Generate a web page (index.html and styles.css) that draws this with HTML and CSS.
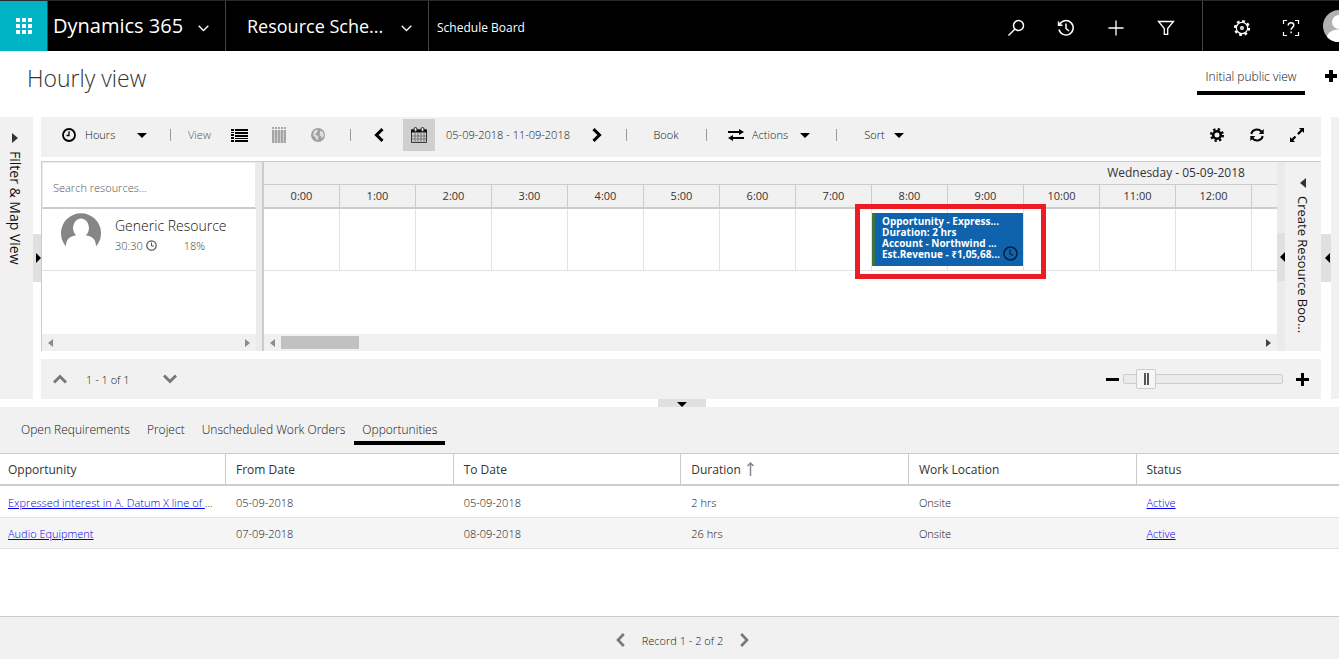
FILE: index.html
```html
<!DOCTYPE html>
<html lang="en">
<head>
<meta charset="utf-8">
<title>Schedule Board</title>
<link rel="stylesheet" href="styles.css">
</head>
<body>
<header class="topbar">
  <button class="waffle" aria-label="Apps">
    <svg width="16" height="16" viewBox="0 0 16 16" fill="#fff"><path d="M0 0h4v4H0zM6 0h4v4H6zM12 0h4v4h-4zM0 6h4v4H0zM6 6h4v4H6zM12 6h4v4h-4zM0 12h4v4H0zM6 12h4v4H6zM12 12h4v4h-4z"/></svg>
  </button>
  <button class="brand">Dynamics 365
    <svg width="11" height="7" viewBox="0 0 11 7" fill="none" stroke="#fff" stroke-width="1.3"><path d="M.7.8l4.8 4.7L10.300.8"/></svg>
  </button>
  <button class="area">Resource Sche...
    <svg width="11" height="7" viewBox="0 0 11 7" fill="none" stroke="#fff" stroke-width="1.3"><path d="M.7.8l4.8 4.7L10.300.8"/></svg>
  </button>
  <a class="crumb" href="#">Schedule Board</a>
  <div class="top-tools">
    <button aria-label="Search"><svg width="18" height="18" viewBox="0 0 18 18" fill="none" stroke="#fff" stroke-width="1.5"><circle cx="11.500" cy="6.500" r="5"/><path d="M8 10l-6.500 6.500"/></svg></button>
    <button aria-label="Recent"><svg width="18" height="18" viewBox="0 0 18 18" fill="none" stroke="#fff" stroke-width="1.500"><path d="M2.600 5.500A7.200 7.200 0 1 1 2 10.500M1.500 2.500v3.700h4M9 4.500v5l3 2.500"/></svg></button>
    <button aria-label="Create"><svg width="16" height="16" viewBox="0 0 16 16" stroke="#fff" stroke-width="1.300"><path d="M8 .5v15M.5 8h15"/></svg></button>
    <button aria-label="Filter"><svg width="18" height="16" viewBox="0 0 18 16" fill="none" stroke="#fff" stroke-width="1.300"><path d="M1.500 1.500h15l-5.800 7v5.800H7.300V8.500z"/></svg></button>
  </div>
  <div class="user-tools">
    <button aria-label="Settings"><svg width="18" height="18" viewBox="0 0 18 18" fill="none" stroke="#fff"><circle cx="9" cy="9" r="7" stroke-width="2.200" stroke-dasharray="2.750"/><circle cx="9" cy="9" r="5.700" stroke-width="1.200"/><circle cx="9" cy="9" r="1.300" stroke-width="1.400"/></svg></button>
    <button aria-label="Help"><svg width="18" height="18" viewBox="0 0 18 18" fill="none" stroke="#fff" stroke-width="1.200"><path d="M1.500 5V1.500H5M13 1.500h3.500V5M16.500 13v3.500H13M5 16.500H1.500V13"/><path d="M6.200 6.500c0-3.800 5.600-3.400 5.600-.2 0 2-2.700 2.200-2.700 4.500M9.100 12.500v1.700" stroke-width="1.500"/></svg></button>
    <button class="avatar" aria-label="Account"><svg width="32" height="32" viewBox="0 0 32 32"><circle cx="16" cy="16" r="16" fill="#b1b1b1"/><circle cx="16" cy="12" r="7" fill="#fff"/><path d="M4 27c1-10 23-10 24 0-6 7-18 7-24 0" fill="#fff"/></svg></button>
  </div>
</header>

<div class="title-row">
  <h1>Hourly view</h1>
  <button class="view-tab">Initial public view</button>
  <button class="add-tab" aria-label="Add tab"><svg width="14" height="14" viewBox="0 0 14 14" stroke="#000" stroke-width="4"><path d="M7 1v12M1 7h12"/></svg></button>
</div>

<main class="workspace">
  <aside class="side-panel">
    <svg width="6" height="10" viewBox="0 0 6 10"><path d="M0 0l6 5-6 5z" fill="#333"/></svg>
    <span>Filter &amp; Map View</span>
  </aside>
  <div class="gutter"><button aria-label="Expand filter"><svg width="5" height="10" viewBox="0 0 5 10"><path d="M0 0l5 5-5 5z"/></svg></button></div>

  <section class="center">
    <div class="toolbar">
      <button class="hours">
        <svg width="14" height="14" viewBox="0 0 14 14" fill="none" stroke="#000"><circle cx="7" cy="7" r="6" stroke-width="1.800"/><path d="M7 3.200V7.500H4.500" stroke-width="1.300"/></svg>
        Hours
        <svg class="push" width="10" height="5" viewBox="0 0 10 5"><path d="M0 0h10L5 5z"/></svg>
      </button>
      <i class="sep"></i>
      <span class="view-label">View</span>
      <button class="icon" aria-label="List view"><svg width="17" height="13" viewBox="0 0 17 13"><path d="M0 0h3v2H0zM4 0h13v2H4zM0 3h3v1H0zM4 3h13v2H4zM0 5h3v2H0zM4 6h13v2H4zM0 8h3v2H0zM4 9h13v1H4zM0 11h3v2H0zM4 11h13v2H4z"/></svg></button>
      <button class="icon" aria-label="Column view"><svg width="14" height="16" viewBox="0 0 14 16" fill="#a6a6a6"><path d="M0 0h2v2H0zM3 0h2v2H3zM6 0h2v2H6zM9 0h2v2H9zM12 0h2v2h-2zM0 3h14v13H0z"/><path d="M2.500 3v13M5.500 3v13M8.500 3v13M11.500 3v13" stroke="#cfcfcf"/></svg></button>
      <button class="icon" aria-label="Map view"><svg width="14" height="14" viewBox="0 0 14 14"><circle cx="7" cy="7" r="7" fill="#a0a0a0"/><path d="M3 3l3-1.500 1 1.200L5.500 5 4 6.500l3 1.500.5 2L6 12.500 4.500 9.500 2 7.500zM9 2.500l3 1.500 1 3.500-2 3-1-2-1.500-1.500L9 5z" fill="#dedede"/></svg></button>
      <i class="sep"></i>
      <button class="prev" aria-label="Previous"><svg width="10" height="14" viewBox="0 0 10 14" fill="none" stroke="#000" stroke-width="3"><path d="M8.500 1.200L2.500 7l6 5.800"/></svg></button>
      <button class="calendar" aria-label="Calendar"><svg width="16" height="16" viewBox="0 0 16 16"><path d="M.5 3h15v12.500H.5z" fill="none" stroke="#333"/><path d="M0 2.500h16v3H0z" fill="#111"/><path d="M4 5v10.500M7 5v10.500M10 5v10.500M13 5v10.500M1 9h14M1 12h14" stroke="#777" fill="none"/><rect x="3" y=".5" width="3" height="4" rx="1.500" fill="#ddd" stroke="#222"/><rect x="10" y=".5" width="3" height="4" rx="1.500" fill="#ddd" stroke="#222"/></svg></button>
      <span class="range">05-09-2018 - 11-09-2018</span>
      <button class="next" aria-label="Next"><svg width="10" height="14" viewBox="0 0 10 14" fill="none" stroke="#000" stroke-width="3"><path d="M1.500 1.200l6 5.800-6 5.800"/></svg></button>
      <i class="sep"></i>
      <button class="book">Book</button>
      <i class="sep"></i>
      <button class="actions">
        <svg width="16" height="12" viewBox="0 0 16 12"><path d="M0 2h11V0l5 3-5 3V4H0zM16 8H5V6L0 9l5 3v-2h11z"/></svg>
        Actions
        <svg class="push" width="10" height="5" viewBox="0 0 10 5"><path d="M0 0h10L5 5z"/></svg>
      </button>
      <i class="sep"></i>
      <button class="sort">Sort <svg width="10" height="5" viewBox="0 0 10 5"><path d="M0 0h10L5 5z"/></svg></button>
      <div class="toolbar-end">
        <button class="icon" aria-label="Board settings"><svg width="14" height="14" viewBox="0 0 14 14" fill="none" stroke="#000"><circle cx="7" cy="7" r="5.800" stroke-width="2.400" stroke-dasharray="2.280"/><circle cx="7" cy="7" r="3.800" stroke-width="2.600"/></svg></button>
        <button class="icon" aria-label="Refresh"><svg width="14" height="14" viewBox="0 0 14 14" fill="none" stroke="#000" stroke-width="1.900"><path d="M1.300 6C2 1.500 8 0 11.500 3.500M12.700 8C12 12.500 6 14 2.500 10.500"/><path d="M13.700 1v5H8.700zM.3 13V8h5z" fill="#000" stroke="none"/></svg></button>
        <button class="icon" aria-label="Full screen"><svg width="14" height="14" viewBox="0 0 14 14"><path d="M9 0h5v5l-1.700-1.700-3.600 3.600-1.600-1.600 3.600-3.600zM0 9v5h5l-1.700-1.700 3-3-1.600-1.600-3 3z"/></svg></button>
      </div>
    </div>

    <div class="board">
      <div class="resources">
        <div class="search"><input type="text" placeholder="Search resources..." aria-label="Search resources"></div>
        <div class="resource">
          <svg width="40" height="34" viewBox="0 0 40 34"><path d="M5 33.500A20 20 0 1 1 35 33.500C35 26 31 23 25 22.500a8 9.500 0 1 0-10 0C9 23 5 26 5 33.500z" fill="#868686"/></svg>
          <div>
            <div class="res-name">Generic Resource</div>
            <div class="res-meta"><span>30:30</span><svg width="11" height="11" viewBox="0 0 11 11" fill="none" stroke="#555"><circle cx="5.500" cy="5.500" r="4.700" stroke-width="1.200"/><path d="M5.500 2.500V6H8"/></svg><span class="pct">18%</span></div>
          </div>
        </div>
        <div class="scroll">
          <svg width="5" height="8" viewBox="0 0 5 8"><path d="M5 0v8L0 4z" fill="#8b8b8b"/></svg>
          <svg class="push" width="5" height="8" viewBox="0 0 5 8"><path d="M0 0v8l5-4z" fill="#8b8b8b"/></svg>
        </div>
      </div>
      <div class="splitter"></div>
      <div class="timeline">
        <div class="day">Wednesday - 05-09-2018</div>
        <div class="hour-row">
          <span>0:00</span><span>1:00</span><span>2:00</span><span>3:00</span><span>4:00</span><span>5:00</span><span>6:00</span><span>7:00</span><span>8:00</span><span>9:00</span><span>10:00</span><span>11:00</span><span>12:00</span>
        </div>
        <div class="lane">
          <div class="highlight">
            <div class="booking">
              <div>Opportunity - Express...</div>
              <div>Duration: 2 hrs</div>
              <div>Account - Northwind ...</div>
              <div>Est.Revenue - ₹1,05,68...</div>
              <svg width="15" height="15" viewBox="0 0 15 15" fill="none" stroke="#06203c"><circle cx="7.500" cy="7.500" r="6.500" stroke-width="1.500"/><path d="M7 3.500v4.300l3 1.700" stroke-width="1.200"/></svg>
            </div>
          </div>
        </div>
        <div class="scroll">
          <svg width="5" height="8" viewBox="0 0 5 8"><path d="M5 0v8L0 4z" fill="#8b8b8b"/></svg>
          <i class="thumb"></i>
          <svg class="push" width="5" height="8" viewBox="0 0 5 8"><path d="M0 0v8l5-4z" fill="#444"/></svg>
        </div>
      </div>
      <div class="gutter inner"><button aria-label="Expand booking panel"><svg width="5" height="10" viewBox="0 0 5 10"><path d="M5 0v10L0 5z"/></svg></button></div>
      <aside class="create-panel">
        <svg width="6" height="10" viewBox="0 0 6 10"><path d="M6 0v10L0 5z" fill="#333"/></svg>
        <span>Create Resource Boo...</span>
      </aside>
    </div>

    <div class="pager">
      <button aria-label="Previous page"><svg width="14" height="10" viewBox="0 0 14 10" fill="none" stroke="#777" stroke-width="3"><path d="M1 8.500l6-6 6 6"/></svg></button>
      <span>1 - 1 of 1</span>
      <button aria-label="Next page"><svg width="14" height="10" viewBox="0 0 14 10" fill="none" stroke="#777" stroke-width="3"><path d="M1 1.500l6 6 6-6"/></svg></button>
      <div class="zoom">
        <button aria-label="Zoom out"><svg width="13" height="13" viewBox="0 0 13 13"><path d="M0 5h13v3H0z"/></svg></button>
        <input type="range" min="0" max="100" value="9" aria-label="Zoom">
        <button aria-label="Zoom in"><svg width="13" height="13" viewBox="0 0 13 13"><path d="M5 0h3v5h5v3H8v5H5V8H0V5h5z"/></svg></button>
      </div>
    </div>
  </section>

  <div class="gutter wide"><button aria-label="Expand details"><svg width="5" height="10" viewBox="0 0 5 10"><path d="M5 0v10L0 5z"/></svg></button></div>
  <aside class="edge-panel"></aside>
</main>

<div class="fold"><button aria-label="Collapse panel"><svg width="10" height="5" viewBox="0 0 10 5"><path d="M0 0h10L5 5z"/></svg></button></div>

<section class="requirements">
  <nav class="tabs">
    <button>Open Requirements</button>
    <button>Project</button>
    <button>Unscheduled Work Orders</button>
    <button class="active">Opportunities</button>
  </nav>
  <table>
    <colgroup><col class="c-first"><col class="c-mid"><col class="c-mid"><col class="c-mid"><col class="c-mid"><col></colgroup>
    <thead>
      <tr><th>Opportunity</th><th>From Date</th><th>To Date</th><th>Duration <svg width="7" height="14" viewBox="0 0 7 14" fill="none" stroke="#888" stroke-width="1.500"><path d="M3.500 14V1M.5 4l3-3 3 3"/></svg></th><th>Work Location</th><th>Status</th></tr>
    </thead>
    <tbody>
      <tr><td><a href="#">Expressed interest in A. Datum X line of </a>...</td><td>05-09-2018</td><td>05-09-2018</td><td>2 hrs</td><td>Onsite</td><td><a href="#">Active</a></td></tr>
      <tr><td><a href="#">Audio Equipment</a></td><td>07-09-2018</td><td>08-09-2018</td><td>26 hrs</td><td>Onsite</td><td><a href="#">Active</a></td></tr>
    </tbody>
  </table>
</section>

<footer class="records">
  <button aria-label="Previous records"><svg width="9" height="14" viewBox="0 0 9 14" fill="none" stroke="#777" stroke-width="2.600"><path d="M7.800 1L2 7l5.800 6"/></svg></button>
  <span>Record 1 - 2 of 2</span>
  <button aria-label="Next records"><svg width="9" height="14" viewBox="0 0 9 14" fill="none" stroke="#777" stroke-width="2.600"><path d="M1.200 1L7 7l-5.800 6"/></svg></button>
</footer>
</body>
</html>
```

FILE: styles.css
```css
* { box-sizing: border-box; }
body {
  margin: 0;
  min-height: 100vh;
  display: flex;
  flex-direction: column;
  overflow-x: hidden;
  background: #fff;
  color: #111;
  font: 12px/16px "Open Sans", "Noto Sans", sans-serif;
  font-weight: 300;
}
button {
  border: 0;
  padding: 0;
  background: none;
  color: inherit;
  font: inherit;
  white-space: nowrap;
  display: flex;
  align-items: center;
  justify-content: center;
}
svg { display: block; flex: none; }
.push { margin-left: auto; }

.topbar {
  display: flex;
  height: 51px;
  border-top: 1px solid #2a2a2a;
  background: #000;
  color: #fff;
  overflow: hidden;
}
.waffle { width: 47px; background: #00b4c5; }
.brand, .area {
  font-size: 20px;
  font-weight: 400;
  line-height: 28px;
  justify-content: space-between;
  border-left: 1px solid #444;
}
.brand { width: 178px; padding: 0 16px 0 5px; }
.area { width: 203px; padding: 0 16px 0 21px; font-size: 18px; }
.brand svg, .area svg { margin-top: 4px; }
.crumb {
  display: flex;
  align-items: center;
  padding: 3px 0 0 8px;
  border-left: 1px solid #444;
  color: #fff;
  font-weight: 400;
  text-decoration: none;
}
.top-tools { display: flex; margin-left: auto; padding: 4px 11px 0 0; }
.top-tools button { width: 50px; }
.user-tools { display: flex; padding: 4px 0 0 14px; border-left: 1px solid #444; }
.user-tools button { width: 49px; }
.user-tools .avatar { width: 16px; margin-left: 8px; padding-bottom: 4px; justify-content: flex-start; }

.title-row { display: flex; height: 66px; padding-left: 27px; }
h1 { margin: 11px auto 0 0; font-size: 23px; line-height: 32px; font-weight: 300; color: #333; }
.view-tab {
  margin-top: 12px;
  height: 32px;
  width: 108px;
  font-size: 12px;
  border-bottom: 4px solid #000;
}
.add-tab { width: 14px; height: 14px; margin: 18px 1px 0 19px; }

.workspace { display: flex; }
.side-panel, .create-panel {
  display: flex;
  flex-direction: column;
  align-items: center;
  background: #f1f1f1;
  font-size: 13px;
  font-weight: 400;
}
.side-panel { width: 33px; padding: 16px 4px 0 0; gap: 8px; font-size: 14px; }
.side-panel span, .create-panel span { writing-mode: vertical-rl; white-space: nowrap; }
.gutter { width: 8px; padding-top: 117px; }
.gutter button { width: 100%; height: 48px; background: #e0e0e0; justify-content: flex-end; }
.gutter.wide { width: 10px; }
.gutter.wide button { padding-right: 1px; }
.gutter.inner { background: #ebebeb; padding-top: 71px; }
.edge-panel { width: 8px; background: #f1f1f1; }
.center { flex: 1; min-width: 0; display: flex; flex-direction: column; }

.toolbar {
  display: flex;
  align-items: center;
  height: 40px;
  padding: 0 5px 4px 21px;
  background: #f1f1f1;
  font-size: 11px;
}
.sep { width: 26px; height: 12px; background: linear-gradient(#999, #999) center / 1px 100% no-repeat; }
.hours { width: 95px; padding-right: 10px; gap: 9px; }
.view-label { width: 37px; padding-left: 5px; color: #555; }
.toolbar .icon { width: 39px; height: 32px; }
.prev { width: 40px; padding-right: 8px; }
.calendar { width: 32px; height: 32px; background: #d0cece; }
.range { width: 146px; text-align: center; white-space: nowrap; }
.next { width: 32px; }
.book { width: 54px; }
.actions { width: 104px; padding: 0 13px 0 9px; gap: 8px; }
.sort { width: 70px; gap: 9px; }
.toolbar-end { display: flex; margin-left: auto; gap: 1px; }

.board {
  display: flex;
  height: 190px;
  margin: 4px 0 8px;
  border-top: 1px solid #ccc;
  border-left: 1px solid #ccc;
}
.resources { width: 214px; display: flex; flex-direction: column; }
.search { height: 47px; border: 1px solid #ebebeb; border-bottom: 2px solid #ccc; }
.search input {
  width: 100%;
  height: 100%;
  border: 0;
  outline: 0;
  padding: 5px 10px 0;
  font: inherit;
  font-size: 11px;
  color: #333;
}
.search input::placeholder { color: #555; opacity: 1; }
.resource { display: flex; gap: 14px; height: 62px; padding: 4px 0 0 19px; border-bottom: 1px solid #e2e2e2; }
.res-name { font-size: 14px; line-height: 26px; }
.res-meta { display: flex; align-items: center; gap: 3px; font-size: 11px; line-height: 13px; color: #444; }
.pct { margin-left: 24px; }
.scroll { display: flex; align-items: center; height: 17px; margin-top: auto; padding: 0 6px; background: #f0f0f0; }
.thumb { width: 78px; height: 13px; margin-left: 6px; background: #c1c1c1; }
.splitter { width: 8px; background: #ebebeb; border-right: 2px solid #ccc; }
.timeline { flex: 1; min-width: 0; display: flex; flex-direction: column; overflow: hidden; font-size: 11px; }
.day, .hour-row, .lane { width: 1824px; }
.day { height: 23px; line-height: 22px; text-align: center; background: #f1f1f1; border-bottom: 1px solid #ccc; font-size: 12px; font-weight: 400; color: #333; }
.hour-row { display: flex; height: 24px; background: #f1f1f1; border-bottom: 2px solid #ccc; }
.hour-row span { width: 76px; border-right: 1px solid #ccc; text-align: center; line-height: 22px; font-weight: 400; color: #333; }
.lane {
  position: relative;
  height: 62px;
  border-bottom: 1px solid #e2e2e2;
  background: repeating-linear-gradient(90deg, transparent 0 75px, #e2e2e2 75px 76px);
}
.highlight {
  position: absolute;
  left: 591px;
  top: -5px;
  width: 191px;
  padding: 4px 18px 8px 12px;
  border: 5px solid #ed1c24;
}
.booking {
  position: relative;
  width: 151px;
  height: 53px;
  padding: 3px 0 0 7px;
  border-left: 3px solid #3b7540;
  background: #0f62ac;
  color: #fff;
  font-size: 10px;
  line-height: 11px;
  font-weight: 700;
  white-space: nowrap;
}
.booking svg { position: absolute; right: 5px; bottom: 5px; }
.create-panel { width: 36px; padding-top: 16px; gap: 8px; }

.pager { display: flex; align-items: center; height: 40px; padding: 0 12px; background: #f1f1f1; font-size: 11px; }
.pager span { width: 96px; padding: 2px 0 0 19px; }
.zoom { display: flex; align-items: center; margin-left: auto; gap: 13px; }
.zoom button:first-child { margin-right: -9px; }
.zoom input {
  appearance: none;
  width: 160px;
  height: 10px;
  margin: 0;
  border: 1px solid #ccc;
  border-radius: 2px;
  background: #ebebeb;
}
.zoom input::-webkit-slider-thumb {
  appearance: none;
  width: 20px;
  height: 20px;
  border: 1px solid #ccc;
  border-radius: 2px;
  background:
    linear-gradient(#555, #555) 7px 3px / 2px 12px no-repeat,
    linear-gradient(#555, #555) 10px 3px / 2px 12px no-repeat,
    #f6f6f6;
}

.fold { display: flex; justify-content: center; height: 8px; padding-left: 24px; }
.fold button { width: 48px; background: #e0e0e0; align-items: flex-end; }

.tabs { display: flex; height: 46px; padding: 9px 0 0 13px; gap: 1px; background: #f1f1f1; }
.tabs button { height: 29px; padding: 2px 8px 0; font-size: 12px; border-bottom: 4px solid transparent; }
.tabs .active { border-bottom-color: #000; }
table { width: 100%; table-layout: fixed; border-collapse: separate; border-spacing: 0; border-top: 1px solid #ccc; }
.c-first { width: 226px; }
.c-mid { width: 17%; }
th, td { padding: 2px 0 0 10px; text-align: left; white-space: nowrap; overflow: hidden; }
th:first-child, td:first-child { padding-left: 8px; }
th { height: 32px; font-weight: 400; font-size: 12px; color: #333; border-bottom: 2px solid #ccc; border-right: 1px solid #ccc; }
th:last-child { border-right: 0; }
th svg { display: inline-block; vertical-align: -2px; margin-left: 3px; }
td { height: 31px; font-size: 11px; border-bottom: 1px solid #e2e2e2; }
tbody tr:first-child td { height: 32px; }
tbody tr:nth-child(2) { background: #f5f5f5; }
td a { color: #00e; }

.records {
  display: flex;
  align-items: center;
  justify-content: center;
  gap: 17px;
  height: 43px;
  margin-top: auto;
  padding: 4px 0 0 26px;
  border-top: 1px solid #ccc;
  background: #f1f1f1;
  font-size: 11px;
}
.records span { padding-top: 2px; }
```
